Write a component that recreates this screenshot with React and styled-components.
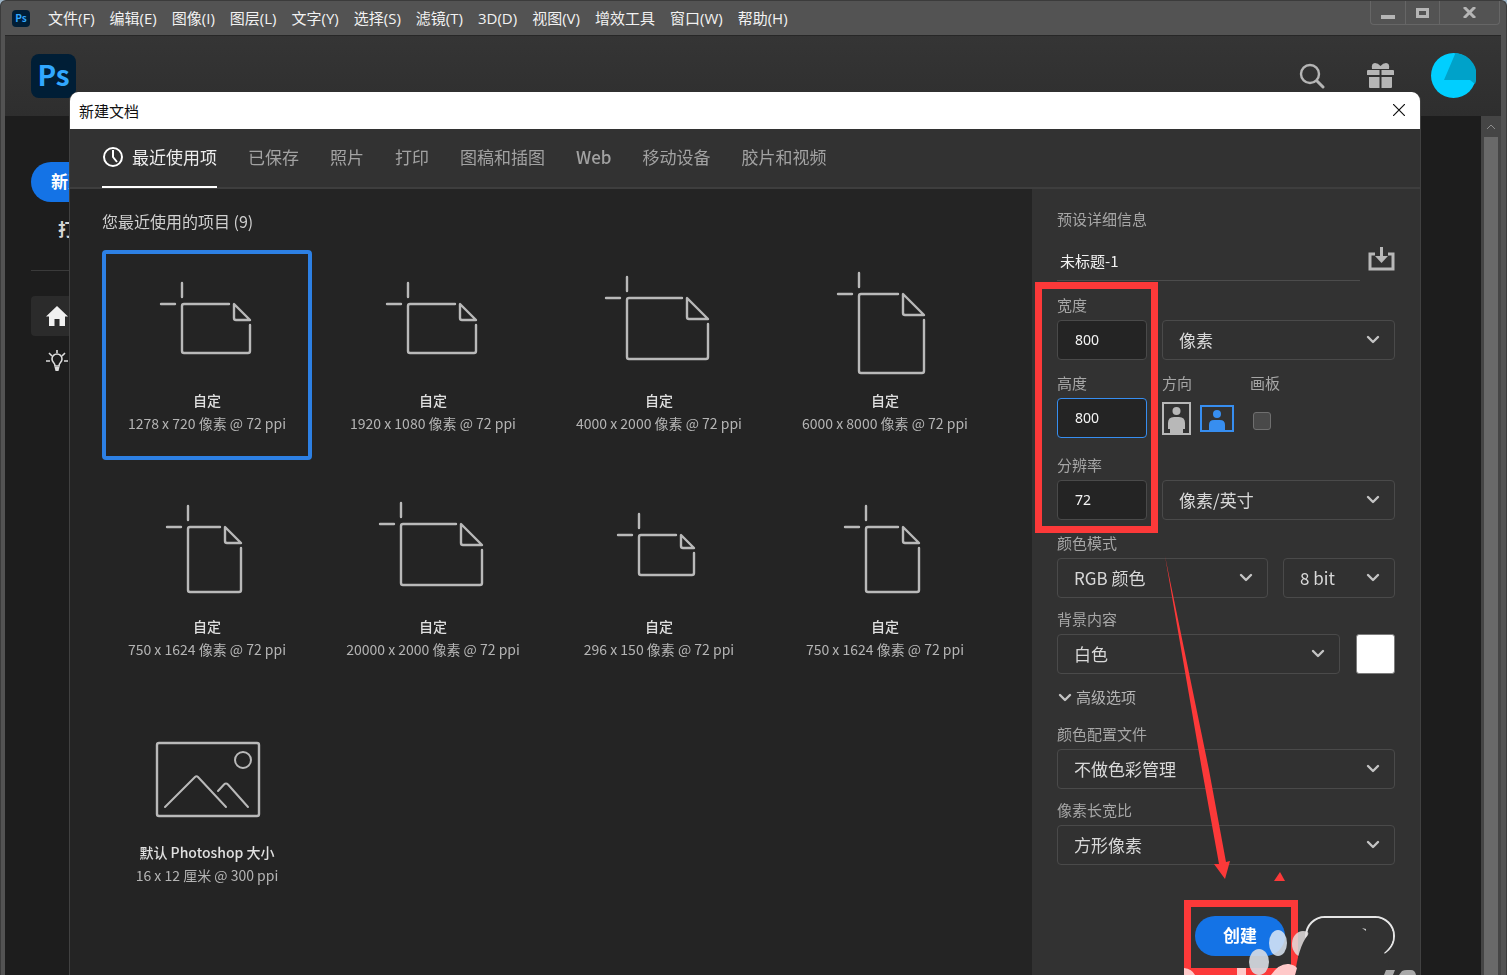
import React from 'react'
import styled, { createGlobalStyle } from 'styled-components'

const GlobalStyle = createGlobalStyle`
    * {
        box-sizing: border-box;
    }

    body {
        margin: 0;
        overflow: hidden;
        background-color: #9db4c6;
        font-family: "Noto Sans CJK SC", sans-serif;
    }

    button, input, select {
        font-family: inherit;
    }

    svg {
        display: block;
    }
`;

const WindowStyle = styled.div`
    display: flex;
    flex-direction: column;
    height: 100vh;
    padding: 0 5px 0 4px;
    border: 1px solid #3b3b3b;
    border-bottom: none;
    border-radius: 6px 6px 0 0;
    background-color: #535353;
`;

const MenuBar = styled.header`
    display: flex;
    flex-shrink: 0;
    align-items: center;
    height: 35px;
    padding: 0 1px 0 7px;
    border-bottom: 1px solid #272727;

    nav {
        display: flex;
        flex: 1;
        gap: 15px;
        margin-left: 18px;
    }
`;

const MenuItem = styled.button`
    padding: 0;
    border: none;
    background: none;
    color: #f2f2f2;
    font-family: "Open Sans", "Noto Sans CJK SC", sans-serif;
    font-size: 15px;
    line-height: 20px;
    white-space: nowrap;
`;

const Logo = styled.div`
    display: flex;
    align-items: center;
    justify-content: center;
    width: ${({ $small }) => ($small ? 18 : 45)}px;
    height: ${({ $small }) => ($small ? 17 : 44)}px;
    padding-bottom: ${({ $small }) => ($small ? 1 : 3)}px;
    border-radius: ${({ $small }) => ($small ? 4 : 8)}px;
    background-color: #001e36;
    color: #31a8ff;
    font-size: ${({ $small }) => ($small ? 10 : 28)}px;
    font-weight: 700;
    line-height: 1;
`;

const WindowButtons = styled.div`
    display: flex;
    align-self: flex-start;
    height: 24px;
    border: 1px solid #666666;
    border-top: none;
    border-radius: 0 0 4px 4px;

    button {
        display: flex;
        align-items: center;
        justify-content: center;
        width: 34px;
        padding: 0;
        border: none;
        background: none;
    }

    button + button {
        border-left: 1px solid #666666;
    }

    button:last-child {
        width: 60px;
    }
`;

const TopBar = styled.div`
    display: flex;
    flex-shrink: 0;
    align-items: center;
    height: 80px;
    padding: 0 25px 1px 26px;
    background: linear-gradient(#353535, #2e2e2e);
`;

const TopActions = styled.div`
    display: flex;
    align-items: center;
    margin-left: auto;

    button {
        margin-right: 42px;
        padding: 0;
        border: none;
        background: none;
    }

    button + button {
        margin-right: 37px;
    }
`;

const HomeArea = styled.div`
    display: flex;
    flex: 1;
    justify-content: space-between;
    background-color: #1d1d1d;
`;

const Sidebar = styled.aside`
    display: flex;
    flex-direction: column;
    align-items: flex-start;
    width: 130px;
    padding: 46px 0 0 26px;

    hr {
        width: 100%;
        margin: 20px 0 25px;
        border: none;
        border-top: 1px solid #3a3a3a;
    }
`;

const PillButton = styled.button`
    height: 40px;
    padding: 0 20px 3px;
    border: none;
    border-radius: 20px;
    background-color: ${({ $plain }) => ($plain ? 'transparent' : '#1473e6')};
    color: ${({ $plain }) => ($plain ? '#d5d5d5' : '#ffffff')};
    font-size: 17px;
    font-weight: 700;
    white-space: nowrap;
`;

const OpenButton = styled(PillButton)`
    margin-top: 8px;
    padding: 0 27px 3px;
`;

const SideLink = styled.a`
    display: flex;
    align-items: center;
    width: 100%;
    height: 40px;
    padding-left: 15px;
    border-radius: 4px;
    background-color: ${({ $active }) => ($active ? '#2b2b2b' : 'transparent')};

    & + & {
        margin-top: 5px;
    }
`;

const Scrollbar = styled.div`
    display: flex;
    flex-direction: column;
    align-items: center;
    width: 20px;
    background-color: #454545;

    svg {
        margin: 8px 0;
    }

    div {
        flex: 1;
        width: 14px;
        background-color: #696969;
    }
`;

const Dialog = styled.section`
    position: fixed;
    inset: 92px 86px 0 69px;
    display: flex;
    flex-direction: column;
    border: 1px solid #414141;
    border-top: none;
    border-bottom: none;
    border-radius: 9px 9px 0 0;
    background-color: #323232;
    overflow: hidden;
`;

const DialogTitle = styled.div`
    display: flex;
    flex-shrink: 0;
    align-items: center;
    justify-content: space-between;
    height: 37px;
    padding: 0 15px 1px 9px;
    background-color: #ffffff;

    h1 {
        margin: 0;
        color: #111111;
        font-size: 15px;
        font-weight: 400;
    }

    button {
        padding: 0;
        border: none;
        background: none;
    }
`;

const Tabs = styled.div`
    display: flex;
    flex-shrink: 0;
    gap: 31px;
    height: 60px;
    padding: 0 32px;
    border-bottom: 2px solid #3e3e3e;
`;

const Tab = styled.button`
    display: flex;
    align-items: center;
    gap: 8px;
    height: 59px;
    padding: 0 0 2px;
    border: none;
    border-bottom: 2px solid ${({ $active }) => ($active ? '#ffffff' : 'transparent')};
    background: none;
    color: ${({ $active }) => ($active ? '#ededed' : '#a2a2a2')};
    font-size: 17px;
    font-weight: ${({ $latin }) => ($latin ? 500 : 400)};
    white-space: nowrap;
`;

const DialogBody = styled.div`
    display: grid;
    flex: 1;
    grid-template-columns: minmax(0, 1fr) 388px;
    min-height: 0;
`;

const Presets = styled.main`
    padding: 21px 32px 0;
    background-color: #242424;

    h2 {
        margin: 0;
        color: #cfcfcf;
        font-size: 16px;
        font-weight: 400;
        line-height: 22px;
    }
`;

const PresetGrid = styled.div`
    display: grid;
    grid-template-columns: repeat(auto-fill, 210px);
    gap: 16px;
    margin-top: 18px;
`;

const PresetCard = styled.button`
    display: flex;
    flex-direction: column;
    align-items: center;
    height: 210px;
    padding: 0;
    border: 4px solid ${({ $selected }) => ($selected ? '#2d80e4' : 'transparent')};
    border-radius: 4px;
    background: none;
    color: #b4b4b4;
    font-size: 14px;
    line-height: 23px;
    white-space: nowrap;

    strong {
        margin-top: 3px;
        color: #e0e0e0;
        font-weight: 500;
    }
`;

const Side = styled.form`
    position: relative;
    padding: 21px 25px 0;
    background-color: #323232;
    overflow: hidden;

    h2 {
        margin: 0;
        color: #a6a6a6;
        font-size: 15px;
        font-weight: 400;
        line-height: 18px;
    }
`;

const NameRow = styled.div`
    display: flex;
    align-items: center;
    justify-content: space-between;
    height: 40px;
    margin-top: 13px;

    button {
        padding: 0;
        border: none;
        background: none;
    }
`;

const NameInput = styled.input`
    width: 303px;
    height: 40px;
    padding: 0 3px 1px;
    border: none;
    border-bottom: 1px solid #4c4c4c;
    outline: none;
    background: none;
    color: #f2f2f2;
    font-size: 15px;
`;

const Row = styled.div`
    display: flex;
    align-items: flex-end;
    gap: 15px;
    margin-top: ${({ $top }) => $top}px;
`;

const FieldStyle = styled.div`
    display: flex;
    flex: ${({ $width }) => ($width ? `0 0 ${$width}px` : '1')};
    flex-direction: column;
    gap: 6px;
    min-width: 0;

    label, .label {
        color: #a6a6a6;
        font-size: 15px;
        line-height: 18px;
        white-space: nowrap;
    }
`;

const NumberInput = styled.input`
    width: 100%;
    height: 40px;
    padding: 0 17px 2px;
    border: 1px solid ${({ $active }) => ($active ? '#378ef0' : '#4a4a4a')};
    border-radius: 4px;
    outline: none;
    background-color: #242424;
    color: #f5f5f5;
    font-family: "Noto Sans", sans-serif;
    font-size: 14px;
`;

const SelectStyle = styled.div`
    position: relative;
    flex: 1;

    select {
        width: 100%;
        height: 40px;
        padding: 0 34px 2px 16px;
        border: 1px solid #4a4a4a;
        border-radius: 4px;
        outline: none;
        appearance: none;
        background-color: #313131;
        color: #d8d8d8;
        font-size: 17px;
    }

    svg {
        position: absolute;
        top: 15px;
        right: 15px;
        pointer-events: none;
    }
`;

const Controls = styled.div`
    display: flex;
    align-items: center;
    gap: 9px;
    height: 40px;

    button {
        padding: 0;
        border: none;
        background: none;
    }

    input {
        appearance: none;
        width: 18px;
        height: 18px;
        margin: 5px 3px 0;
        border: 1px solid #6f6f6f;
        border-radius: 3px;
        background-color: #494949;
    }
`;

const Swatch = styled.button`
    width: 39px;
    height: 40px;
    margin-left: 1px;
    border: 1px solid #7c7c7c;
    border-radius: 3px;
    background-color: #ffffff;
`;

const Advanced = styled.button`
    display: flex;
    align-items: center;
    gap: 4px;
    margin-top: 13px;
    padding: 0 1px;
    border: none;
    background: none;
    color: #b4b4b4;
    font-size: 15px;
    line-height: 20px;
`;

const Actions = styled.div`
    display: flex;
    justify-content: flex-end;
    gap: 20px;
    margin-top: 51px;

    button {
        width: 90px;
    }
`;

const CloseButton = styled(PillButton)`
    border: 2px solid #e6e6e6;
`;

const Callout = styled.div`
    position: absolute;
    top: ${({ $top }) => $top}px;
    left: ${({ $left }) => $left}px;
    width: ${({ $width }) => $width}px;
    height: ${({ $height }) => $height}px;
    border: 7px solid #fc3939;
    pointer-events: none;
`;

const Overlay = styled.svg`
    position: absolute;
    top: 0;
    left: 0;
    pointer-events: none;
`;

const menus = [
    '文件(F)', '编辑(E)', '图像(I)', '图层(L)', '文字(Y)', '选择(S)',
    '滤镜(T)', '3D(D)', '视图(V)', '增效工具', '窗口(W)', '帮助(H)',
]

const tabs = ['最近使用项', '已保存', '照片', '打印', '图稿和插图', 'Web', '移动设备', '胶片和视频']

// page is [x, y, width, height, fold]
const presets = [
    { title: '自定', size: '1278 x 720 像素 @ 72 ppi', page: [80, 54, 68, 49, 16] },
    { title: '自定', size: '1920 x 1080 像素 @ 72 ppi', page: [80, 54, 68, 49, 16] },
    { title: '自定', size: '4000 x 2000 像素 @ 72 ppi', page: [73, 48, 81, 61, 21] },
    { title: '自定', size: '6000 x 8000 像素 @ 72 ppi', page: [79, 44, 65, 79, 21] },
    { title: '自定', size: '750 x 1624 像素 @ 72 ppi', page: [86, 51, 53, 65, 16] },
    { title: '自定', size: '20000 x 2000 像素 @ 72 ppi', page: [73, 48, 81, 61, 21] },
    { title: '自定', size: '296 x 150 像素 @ 72 ppi', page: [85, 59, 55, 40, 13] },
    { title: '自定', size: '750 x 1624 像素 @ 72 ppi', page: [86, 51, 53, 65, 16] },
    { title: '默认 Photoshop 大小', size: '16 x 12 厘米 @ 300 ppi' },
]

const lineIcon = {
    width: 202,
    height: 132,
    viewBox: '4 4 202 132',
    fill: 'none',
    stroke: '#b9b9b9',
    strokeWidth: 2.4,
    strokeLinecap: 'round',
    strokeLinejoin: 'round',
}

function PageIcon({ page }) {
    const [x, y, w, h, fold] = page
    const right = x + w
    const bottom = y + h
    return (
        <svg {...lineIcon}>
            <path d={`M${x} ${y - 21}v14M${x - 21} ${y}h14`} />
            <path d={`M${right - fold - 5} ${y}H${x + 2}q-2 0 -2 2V${bottom - 2}q0 2 2 2H${right - 2}q2 0 2 -2V${y + fold + 5}`} />
            <path d={`M${right - fold} ${y}V${y + fold - 2}q0 2 2 2H${right}Z`} />
        </svg>
    )
}

function PictureIcon() {
    return (
        <svg {...lineIcon}>
            <rect x="55" y="41" width="102" height="73" rx="2" />
            <circle cx="141" cy="58" r="8" strokeWidth="2" />
            <path d="M63 105L93 75q1.500 -1.500 3 0L124 105" strokeWidth="2" />
            <path d="M116 89L122 82.500q2 -2 4 0L146 105" strokeWidth="2" />
        </svg>
    )
}

function Chevron({ size = 14 }) {
    return (
        <svg width={size} height="9" viewBox="0 0 14 9">
            <path d="M2 2l5 5 5-5" fill="none" stroke="#c4c4c4" strokeWidth="2.400" strokeLinecap="round" strokeLinejoin="round" />
        </svg>
    )
}

function Select({ id, value, label }) {
    return (
        <SelectStyle>
            <select id={id} defaultValue={value} aria-label={label}>
                <option>{value}</option>
            </select>
            <Chevron />
        </SelectStyle>
    )
}

function Field({ id, label, width, children }) {
    return (
        <FieldStyle $width={width}>
            <label htmlFor={id}>{label}</label>
            {children}
        </FieldStyle>
    )
}

function Marks() {
    return (
        <Overlay width="388" height="786" viewBox="1032 189 388 786">
            <path d="M1165 556L1209 770L1226 862L1230 861L1225 879L1214 864L1219 864L1202 770Z" fill="#fc3939" />
            <path d="M1280 872l5 9h-11z" fill="#fc3939" />
            <ellipse cx="1303" cy="944" rx="11" ry="13" fill="#e3dede" fillOpacity="0.850" />
            <path d="M1308 935C1301 943 1297 958 1295 975H1390L1388 957L1384 953C1390 948 1393 942 1393 936C1393 926 1384 918 1374 918H1326C1317 918 1309 925 1308 935Z" fill="#323232" />
            <path d="M1362 928l4 1v2z" fill="#c9c9c9" />
            <ellipse cx="1278" cy="943" rx="9" ry="13" fill="#dce8f5" fillOpacity="0.850" />
            <ellipse cx="1259" cy="962" rx="10" ry="13" fill="#d8dde3" fillOpacity="0.900" />
            <path d="M1184 968q8 1 11 7h-11zM1237 968h9v7h-9zM1271 975q8-12 18-11q6 1 8 4l-2 7z" fill="#ffc9c9" />
            <path d="M1386 970h9l-2 5h-9zM1399 975l3-4q2-1 5-1h4q4 0 5 5z" fill="#a9a9a9" />
        </Overlay>
    )
}

function DetailsPanel() {
    return (
        <Side onSubmit={(e) => e.preventDefault()}>
            <h2>预设详细信息</h2>
            <NameRow>
                <NameInput aria-label="名称" defaultValue="未标题-1" />
                <button type="button" aria-label="保存预设">
                    <svg width="27" height="40" viewBox="0 0 27 40" fill="none" stroke="#b8b8b8" strokeWidth="3">
                        <path d="M7 13H2v15h23V13h-5" />
                        <path d="M13.500 6v12" />
                        <path d="M7 15h13l-6.500 7z" fill="#b8b8b8" stroke="none" />
                    </svg>
                </button>
            </NameRow>
            <Row $top={15}>
                <Field id="width" label="宽度" width={90}>
                    <NumberInput id="width" defaultValue="800" />
                </Field>
                <Select label="单位" value="像素" />
            </Row>
            <Row $top={14}>
                <Field id="height" label="高度" width={90}>
                    <NumberInput id="height" defaultValue="800" $active />
                </Field>
                <FieldStyle $width={73}>
                    <span className="label">方向</span>
                    <Controls>
                        <button type="button" aria-label="纵向">
                            <svg width="29" height="33" viewBox="0 0 29 33" fill="#b8b8b8">
                                <path d="M1 1h27v31H1z" fill="none" stroke="#b8b8b8" strokeWidth="2" />
                                <circle cx="14.500" cy="9" r="4" />
                                <path d="M6 21q0-6 6-6h5q6 0 6 6v6h-2v5H8v-5H6z" />
                            </svg>
                        </button>
                        <button type="button" aria-label="横向">
                            <svg width="34" height="27" viewBox="0 0 34 27" fill="#378ef0">
                                <path d="M1 1h32v25H1z" fill="none" stroke="#378ef0" strokeWidth="2" />
                                <circle cx="17" cy="9" r="4" />
                                <path d="M9 20q0-5 5-5h6q5 0 5 5v6H9z" />
                            </svg>
                        </button>
                    </Controls>
                </FieldStyle>
                <Field id="artboard" label="画板">
                    <Controls>
                        <input id="artboard" type="checkbox" />
                    </Controls>
                </Field>
            </Row>
            <Row $top={18}>
                <Field id="resolution" label="分辨率" width={90}>
                    <NumberInput id="resolution" defaultValue="72" />
                </Field>
                <Select label="分辨率单位" value="像素/英寸" />
            </Row>
            <Row $top={14}>
                <Field id="mode" label="颜色模式">
                    <Select id="mode" value="RGB 颜色" />
                </Field>
                <FieldStyle $width={112}>
                    <Select label="位深度" value="8 bit" />
                </FieldStyle>
            </Row>
            <Row $top={12}>
                <Field id="background" label="背景内容">
                    <Select id="background" value="白色" />
                </Field>
                <Swatch type="button" aria-label="背景颜色" />
            </Row>
            <Advanced type="button">
                <Chevron />
                高级选项
            </Advanced>
            <Row $top={18}>
                <Field id="profile" label="颜色配置文件">
                    <Select id="profile" value="不做色彩管理" />
                </Field>
            </Row>
            <Row $top={12}>
                <Field id="ratio" label="像素长宽比">
                    <Select id="ratio" value="方形像素" />
                </Field>
            </Row>
            <Actions>
                <PillButton type="submit">创建</PillButton>
                <CloseButton type="button" $plain aria-label="关闭" />
            </Actions>
            <Callout $top={93} $left={3} $width={123} $height={251} />
            <Callout $top={711} $left={152} $width={114} $height={75} />
            <Marks />
        </Side>
    )
}

function NewDocumentDialog() {
    return (
        <Dialog role="dialog" aria-label="新建文档">
            <DialogTitle>
                <h1>新建文档</h1>
                <button aria-label="关闭对话框">
                    <svg width="12" height="12" viewBox="0 0 12 12" stroke="#111111" strokeWidth="1.200">
                        <path d="M0 0l12 12M12 0L0 12" />
                    </svg>
                </button>
            </DialogTitle>
            <Tabs role="tablist">
                {tabs.map((tab, i) => (
                    <Tab key={tab} role="tab" aria-selected={i === 0} $active={i === 0} $latin={tab === 'Web'}>
                        {i === 0 && (
                            <svg width="22" height="22" viewBox="0 0 22 22" fill="none" stroke="#ffffff" strokeWidth="2">
                                <circle cx="11" cy="11" r="9" />
                                <path d="M11 4v7l4 5" />
                            </svg>
                        )}
                        {tab}
                    </Tab>
                ))}
            </Tabs>
            <DialogBody>
                <Presets>
                    <h2>您最近使用的项目 (9)</h2>
                    <PresetGrid>
                        {presets.map((preset, i) => (
                            <PresetCard key={i} $selected={i === 0}>
                                {preset.page ? <PageIcon page={preset.page} /> : <PictureIcon />}
                                <strong>{preset.title}</strong>
                                <span>{preset.size}</span>
                            </PresetCard>
                        ))}
                    </PresetGrid>
                </Presets>
                <DetailsPanel />
            </DialogBody>
        </Dialog>
    )
}

function App() {
    return (
        <>
            <GlobalStyle />
            <WindowStyle>
                <MenuBar>
                    <Logo $small>Ps</Logo>
                    <nav>
                        {menus.map((menu) => <MenuItem key={menu}>{menu}</MenuItem>)}
                    </nav>
                    <WindowButtons>
                        <button aria-label="最小化">
                            <svg width="14" height="12"><path d="M0 8h14v4H0z" fill="#b5b5b5" /></svg>
                        </button>
                        <button aria-label="最大化">
                            <svg width="13" height="10"><path d="M1.500 1.500h10v7h-10z" fill="none" stroke="#b5b5b5" strokeWidth="3" /></svg>
                        </button>
                        <button aria-label="关闭窗口">
                            <svg width="13" height="11"><path d="M1 0l11 11M12 0L1 11" stroke="#b5b5b5" strokeWidth="3" /></svg>
                        </button>
                    </WindowButtons>
                </MenuBar>
                <TopBar>
                    <Logo>Ps</Logo>
                    <TopActions>
                        <button aria-label="搜索">
                            <svg width="26" height="26" viewBox="0 0 26 26" fill="none" stroke="#b5b5b5" strokeWidth="2.400" strokeLinecap="round">
                                <circle cx="11" cy="11" r="9" />
                                <path d="M18 18l6 6" strokeWidth="3" />
                            </svg>
                        </button>
                        <button aria-label="新增功能">
                            <svg width="27" height="25" viewBox="0 0 27 25" fill="#b5b5b5">
                                <path d="M0 8q0-1 1-1h11.500v5H0zM14.500 7H26q1 0 1 1v4H14.500zM2 14h10.500v11H3q-1 0-1-1zM14.500 14H25v10q0 1-1 1h-9.500z" />
                                <path d="M5 6Q4 0 8 0q3 0 5.500 3Q16 0 19 0q4 0 3 6z" />
                            </svg>
                        </button>
                        <svg width="45" height="45" viewBox="0 0 45 45">
                            <circle cx="22.500" cy="22.500" r="22.500" fill="#00cfff" />
                            <path d="M24.500 0A22.500 22.500 0 0 1 44 31L39 27H13z" fill="#00a2c9" />
                        </svg>
                    </TopActions>
                </TopBar>
                <HomeArea>
                    <Sidebar>
                        <PillButton>新建</PillButton>
                        <OpenButton $plain>打开</OpenButton>
                        <hr />
                        <SideLink href="#home" $active aria-label="主页">
                            <svg width="22" height="20" viewBox="0 0 22 20" fill="#f0f0f0">
                                <path d="M11 0l11 10.500h-3V20h-5.500v-7h-5v7H3v-9.500H0z" />
                            </svg>
                        </SideLink>
                        <SideLink href="#learn" aria-label="学习">
                            <svg width="22" height="22" viewBox="0 0 22 22" fill="none" stroke="#dcdcdc" strokeWidth="1.600">
                                <path d="M11 0v3M0 11h4M18 11h4M3 3l3 3M19 3l-3 3" />
                                <path d="M9 16q0-2-1.500-3.500a5 5 0 1 1 7 0Q13 14 13 16z" />
                                <path d="M8.500 17h5l-1 4h-3z" fill="#dcdcdc" stroke="none" />
                            </svg>
                        </SideLink>
                    </Sidebar>
                    <Scrollbar>
                        <svg width="8" height="5"><path d="M0 5l4-4 4 4" fill="none" stroke="#8c8c8c" /></svg>
                        <div />
                    </Scrollbar>
                </HomeArea>
            </WindowStyle>
            <NewDocumentDialog />
        </>
    )
}

export default App
